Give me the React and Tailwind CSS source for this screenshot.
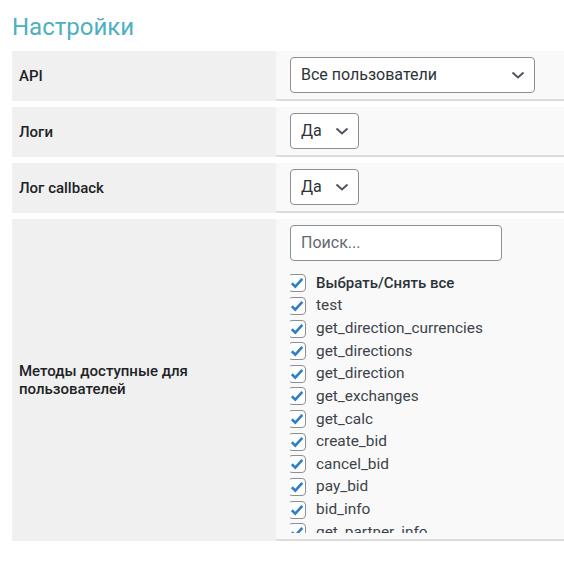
import React from "react";

const methods = [
  "test",
  "get_direction_currencies",
  "get_directions",
  "get_direction",
  "get_exchanges",
  "get_calc",
  "create_bid",
  "cancel_bid",
  "pay_bid",
  "bid_info",
  "get_partner_info",
  "get_partner_links",
];

function Chevron() {
  return (
    <svg width="14" height="8" viewBox="0 0 14 8" className="shrink-0">
      <path d="M1.5 1.5 L7 6.5 L12.5 1.5" fill="none" stroke="#50575e" strokeWidth="2" />
    </svg>
  );
}

function Check() {
  return (
    <span className="-ml-[2px] flex h-[18px] w-[18px] min-w-[18px] shrink-0 items-center justify-center rounded-[4px] border border-[#8c8f94] bg-white">
      <svg width="14" height="12" viewBox="0 0 14 12">
        <path d="M1.8 6.2 L5.3 9.6 L12.3 1.8" fill="none" stroke="#2f7fc8" strokeWidth="2.6" />
      </svg>
    </span>
  );
}

function Select({ text, wide }) {
  return (
    <div
      className={
        "flex h-9 items-center justify-between rounded-[4px] border border-[#8c8f94] bg-white pl-[10px] pr-[9px] text-[16px] text-[#2c3338] " +
        (wide ? "w-[245px]" : "w-[69px]")
      }
    >
      <span>{text}</span>
      <Chevron />
    </div>
  );
}

function Row({ label, children }) {
  return (
    <div className="flex">
      <div className="flex w-[264px] shrink-0 items-center bg-[#f0f0f0] pl-[7px] text-[15px] font-medium leading-[18px] text-[#1d2327]">
        {label}
      </div>
      <div className="flex-1 border-b-2 border-[#dcdcdc] bg-[#f9f9f9] py-[6px] pl-[14px]">{children}</div>
    </div>
  );
}

export default function App() {
  return (
    <div className="min-h-[565px] bg-white pl-[12px]" style={{ fontFamily: "Roboto, 'Liberation Sans', sans-serif" }}>
      <h1 className="pt-[12px] pb-[9px] text-[24px] font-normal leading-[30px] text-[#4eafc2]">Настройки</h1>
      <div className="flex flex-col gap-[6px]">
        <Row label="API">
          <Select text="Все пользователи" wide />
        </Row>
        <Row label="Логи">
          <Select text="Да" />
        </Row>
        <Row label="Лог callback">
          <Select text="Да" />
        </Row>
        <Row label={<span>Методы доступные для<br />пользователей</span>}>
          <div className="flex h-9 w-[212px] items-center rounded-[4px] border border-[#8c8f94] bg-white pl-[10px] text-[16px] text-[#646970]">
            Поиск...
          </div>
          <div className="mt-[11px] h-[261px] overflow-hidden">
            <label className="flex h-[22.64px] items-center gap-[10px] text-[15px] font-medium text-[#2c3338]">
              <Check />
              <span>Выбрать/Снять все</span>
            </label>
            {methods.map((m) => (
              <label key={m} className="flex h-[22.64px] items-center gap-[10px] text-[15.4px] text-[#3c434a]">
                <Check />
                <span>{m}</span>
              </label>
            ))}
          </div>
        </Row>
      </div>
    </div>
  );
}
